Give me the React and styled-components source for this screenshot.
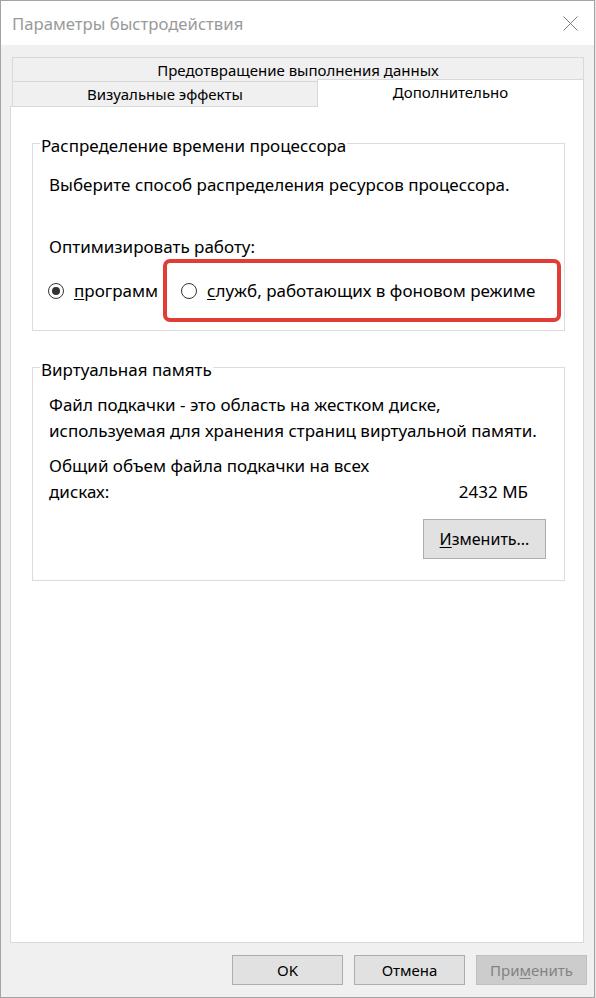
import React from "react";
import styled, { createGlobalStyle } from "styled-components";

const FONT = `"Noto Sans", "Open Sans", sans-serif`;

const Global = createGlobalStyle`
  html, body { margin: 0; padding: 0; background: #e6e6e6; }
  * { box-sizing: border-box; }
`;

const Window = styled.div`
  width: 595px;
  height: 998px;
  border: 1px solid #a3a3a3;
  display: flex;
  flex-direction: column;
  font-family: ${FONT};
  font-size: 17px;
  color: #000;
  background: #f0f0f0;
`;

const TitleBar = styled.div`
  height: 44px;
  background: #fff;
  display: flex;
  align-items: center;
  padding: 0 16px 0 11px;
`;

const Title = styled.div`
  flex: 1;
  font-size: 16.7px;
  color: #9a9a9a;
`;

const Client = styled.div`
  flex: 1;
  display: flex;
  flex-direction: column;
  padding: 12px 10px 0 9px;
`;

const TabStrip = styled.div`
  margin-left: 2px;
  display: flex;
  flex-direction: column;
  font-size: 15px;
`;

const BackTab = styled.div`
  height: 24px;
  border: 1px solid #d9d9d9;
  border-bottom: none;
  padding-top: 1px;
  line-height: 22px;
  text-align: center;
  background: #f0f0f0;
`;

const TabRow = styled.div`
  display: flex;
`;

const Tab = styled.div`
  position: relative;
  text-align: center;
  line-height: 22px;
  border: 1px solid #d9d9d9;
  border-bottom: none;
  background: ${(p) => (p.$active ? "#fff" : "#f0f0f0")};
  width: ${(p) => (p.$active ? "auto" : "305px")};
  flex: ${(p) => (p.$active ? 1 : "none")};
  border-right: ${(p) => (p.$active ? "1px solid #d9d9d9" : "none")};
  height: ${(p) => (p.$active ? 28 : 25)}px;
  margin-top: ${(p) => (p.$active ? -2 : 0)}px;
  margin-bottom: ${(p) => (p.$active ? -1 : 0)}px;
  padding-top: 1px;
  z-index: ${(p) => (p.$active ? 1 : 0)};
`;

const Panel = styled.div`
  flex: 1;
  background: #fff;
  border: 1px solid #d9d9d9;
  padding: 0 18px 0 21px;
  display: flex;
  flex-direction: column;
`;

const Group = styled.fieldset`
  margin: 23px 0 0;
  padding: ${(p) => p.$pad};
  border: 1px solid #dcdcdc;
  min-width: 0;
`;

const Legend = styled.legend`
  padding: 6px 1px 0;
  margin-left: -9px;
  line-height: 20px;
`;

const Text = styled.p`
  margin: ${(p) => p.$mt || 0}px 0 0;
  line-height: ${(p) => p.$lh || 20}px;
`;

const RadioRow = styled.div`
  margin-top: 2px;
  display: flex;
  align-items: center;
`;

const RadioOption = styled.label`
  display: flex;
  align-items: center;
  gap: 10px;
  line-height: 20px;
  white-space: nowrap;
  flex: none;
  margin-left: ${(p) => p.$ml || 0}px;
`;

const Circle = styled.span`
  width: 16px;
  height: 16px;
  border-radius: 50%;
  border: 1px solid #333;
  background: #fff;
  display: flex;
  align-items: center;
  justify-content: center;
  flex: none;
`;

const Dot = styled.span`
  width: 8px;
  height: 8px;
  border-radius: 50%;
  background: #333;
`;

const Highlight = styled.div`
  flex: none;
  margin-left: 5px;
  width: 398px;
  height: 63px;
  border: 4px solid #e23c36;
  border-radius: 7px;
  padding-left: 14px;
  display: flex;
  align-items: center;
`;

const Key = styled.u`
  text-decoration-thickness: 1px;
  text-underline-offset: 2px;
`;

const SizeRow = styled.div`
  margin-top: 9px;
  display: flex;
  align-items: flex-end;
  justify-content: space-between;
  padding-right: 18px;
  line-height: 26px;
`;

const SizeLabel = styled.div`
  width: 340px;
`;

const ButtonRight = styled.div`
  display: flex;
  justify-content: flex-end;
  margin-top: 14px;
`;

const Button = styled.button`
  font-family: ${FONT};
  font-size: ${(p) => p.$fs || 15}px;
  width: ${(p) => p.$w || 111}px;
  height: ${(p) => p.$h || 30}px;
  padding: 0;
  border: 1px solid ${(p) => (p.disabled ? "#bfbfbf" : "#adadad")};
  background: ${(p) => (p.disabled ? "#cccccc" : "#e1e1e1")};
  color: ${(p) => (p.disabled ? "#838383" : "#000")};
`;

const ButtonBar = styled.div`
  display: flex;
  justify-content: flex-end;
  gap: 11px;
  margin: 12px -3px 12px 0;
`;

export default function App() {
  return (
    <>
      <Global />
      <Window>
        <TitleBar>
          <Title>Параметры быстродействия</Title>
          <svg width="15" height="15" viewBox="0 0 15 15">
            <path d="M0.5 0.5 L14.5 14.5 M14.5 0.5 L0.5 14.5" stroke="#7a7a7a" strokeWidth="1" />
          </svg>
        </TitleBar>
        <Client>
          <TabStrip>
            <BackTab>Предотвращение выполнения данных</BackTab>
            <TabRow>
              <Tab>Визуальные эффекты</Tab>
              <Tab $active>Дополнительно</Tab>
            </TabRow>
          </TabStrip>
          <Panel>
            <Group $pad="19px 18px 8px 16px">
              <Legend>Распределение времени процессора</Legend>
              <Text>Выберите способ распределения ресурсов процессора.</Text>
              <Text $mt={42}>Оптимизировать работу:</Text>
              <RadioRow>
                <RadioOption $ml={-1}>
                  <Circle>
                    <Dot />
                  </Circle>
                  <span>
                    <Key>п</Key>рограмм
                  </span>
                </RadioOption>
                <Highlight>
                  <RadioOption>
                    <Circle />
                    <span>
                      <Key>с</Key>лужб, работающих в фоновом режиме
                    </span>
                  </RadioOption>
                </Highlight>
              </RadioRow>
            </Group>
            <Group $pad="12px 18px 21px 16px">
              <Legend>Виртуальная память</Legend>
              <Text $lh={26}>
                Файл подкачки - это область на жестком диске,
                <br />
                используемая для хранения страниц виртуальной памяти.
              </Text>
              <SizeRow>
                <SizeLabel>Общий объем файла подкачки на всех дисках:</SizeLabel>
                <span>2432 МБ</span>
              </SizeRow>
              <ButtonRight>
                <Button $w={123} $h={40} $fs={16}>
                  <Key>И</Key>зменить...
                </Button>
              </ButtonRight>
            </Group>
          </Panel>
          <ButtonBar>
            <Button>OK</Button>
            <Button>Отмена</Button>
            <Button disabled>
              При<Key>м</Key>енить
            </Button>
          </ButtonBar>
        </Client>
      </Window>
    </>
  );
}
